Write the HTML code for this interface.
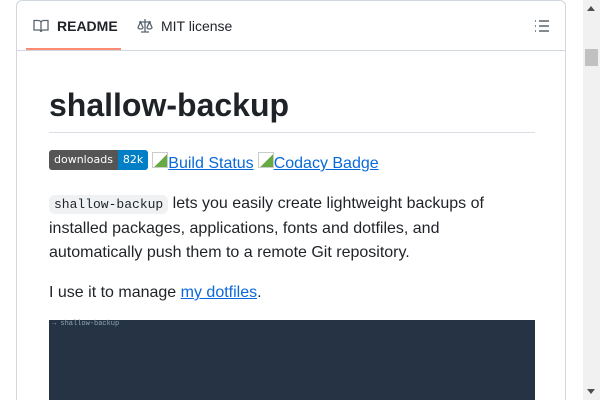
<!DOCTYPE html>
<html style="overflow:hidden;height:400px"><head><style>
body{margin:0;width:600px;height:400px;overflow:hidden;background:#fff;font-family:"Liberation Sans",sans-serif;color:#1f2328;position:relative}
.card{position:absolute;left:16px;top:0;width:550px;height:400px;border:1px solid #d0d7de;border-bottom:0;border-radius:6px 6px 0 0;box-sizing:border-box;overflow:hidden}
.tabs{height:49px;border-bottom:1px solid #d0d7de;position:relative}
.tab{position:absolute;top:0;height:49px;display:flex;align-items:center;font-size:14px}
.tab svg{margin-right:8px}
.ul{position:absolute;left:9px;top:47px;width:95px;height:2px;background:#fd8c73}
h1{position:absolute;left:32px;top:84px;margin:0;font-size:32px;font-weight:600;line-height:40px}
.hr{position:absolute;left:32px;top:131px;width:486px;height:1px;background:#d8dee4}
p{position:absolute;left:32px;margin:0;font-size:16px;line-height:24px;width:450px}
a{color:#0969da;text-decoration:underline}
code{font-family:"Liberation Mono",monospace;font-size:13px;background:#eff1f3;padding:2px 5px;border-radius:6px}
.img{position:absolute;left:32px;top:319px;width:486px;height:100px;background:#253344}
.sb{position:absolute;right:0;top:0;width:17px;height:400px;background:#f1f1f1}
</style></head><body>
<div class="card">
 <div class="tabs">
  <div class="tab" style="left:16px;font-weight:600"><svg width="16" height="16" viewBox="0 0 16 16" fill="none" stroke="#59636e" stroke-width="1.3"><path d="M1 2.5h4.5c1.4 0 2.5 1 2.5 2.5v9c0-1-1-2-2-2H1z M15 2.5h-4.5C9.1 2.5 8 3.5 8 5v9c0-1 1-2 2-2h5z"/></svg>README</div>
  <div class="tab" style="left:120px"><svg width="16" height="16" viewBox="0 0 16 16" fill="none" stroke="#59636e" stroke-width="1.3"><path d="M8 1v13M4 14h8M2 4h12M3.5 4 1 9.5a2.5 1.5 0 0 0 5 0zM12.5 4 10 9.5a2.5 1.5 0 0 0 5 0z"/></svg>MIT license</div>
  <svg style="position:absolute;left:517px;top:17px" width="16" height="16" viewBox="0 0 16 16" stroke="#59636e" stroke-width="1.4"><path d="M1 3h1M1 8h1M1 13h1M5 3h10M5 8h10M5 13h10"/></svg>
  <div class="ul"></div>
 </div>
 <h1>shallow-backup</h1>
 <div class="hr"></div>
 <div style="position:absolute;left:32px;top:149px;height:20px;display:flex;align-items:center;font-size:16px">
  <span style="display:inline-flex;height:20px;border-radius:3px;overflow:hidden;font-size:11px;font-family:'DejaVu Sans',sans-serif;color:#fff;line-height:20px"><span style="background:#555;padding:0 5px">downloads</span><span style="background:#007ec6;padding:0 5px">82k</span></span>
  <span style="margin-left:4px;display:inline-block;width:16px;height:16px;border:1px solid #ccc;box-sizing:border-box;background:linear-gradient(135deg,#fff 55%,#6a4 55%)"></span><a style="margin-top:8px">Build Status</a>
  <span style="margin-left:4px;display:inline-block;width:16px;height:16px;border:1px solid #ccc;box-sizing:border-box;background:linear-gradient(135deg,#fff 55%,#6a4 55%)"></span><a style="margin-top:8px">Codacy Badge</a>
 </div>
 <p style="top:191px"><code>shallow-backup</code> lets you easily create lightweight backups of installed packages, applications, fonts and dotfiles, and automatically push them to a remote Git repository.</p>
 <p style="top:280px">I use it to manage <a>my dotfiles</a>.</p>
 <div class="img"><span style="position:absolute;left:3px;top:0;font-size:7px;color:#8fa3b8;font-family:'Liberation Mono',monospace">→ shallow-backup</span></div>
</div>
<div class="sb">
 <div style="position:absolute;left:4px;top:6px;border:4px solid transparent;border-bottom:5px solid #505050;border-top:0"></div>
 <div style="position:absolute;left:2px;top:49px;width:13px;height:17px;background:#c1c1c1"></div>
 <div style="position:absolute;left:4px;top:389px;border:4px solid transparent;border-top:5px solid #505050;border-bottom:0"></div>
</div>
</body></html>
